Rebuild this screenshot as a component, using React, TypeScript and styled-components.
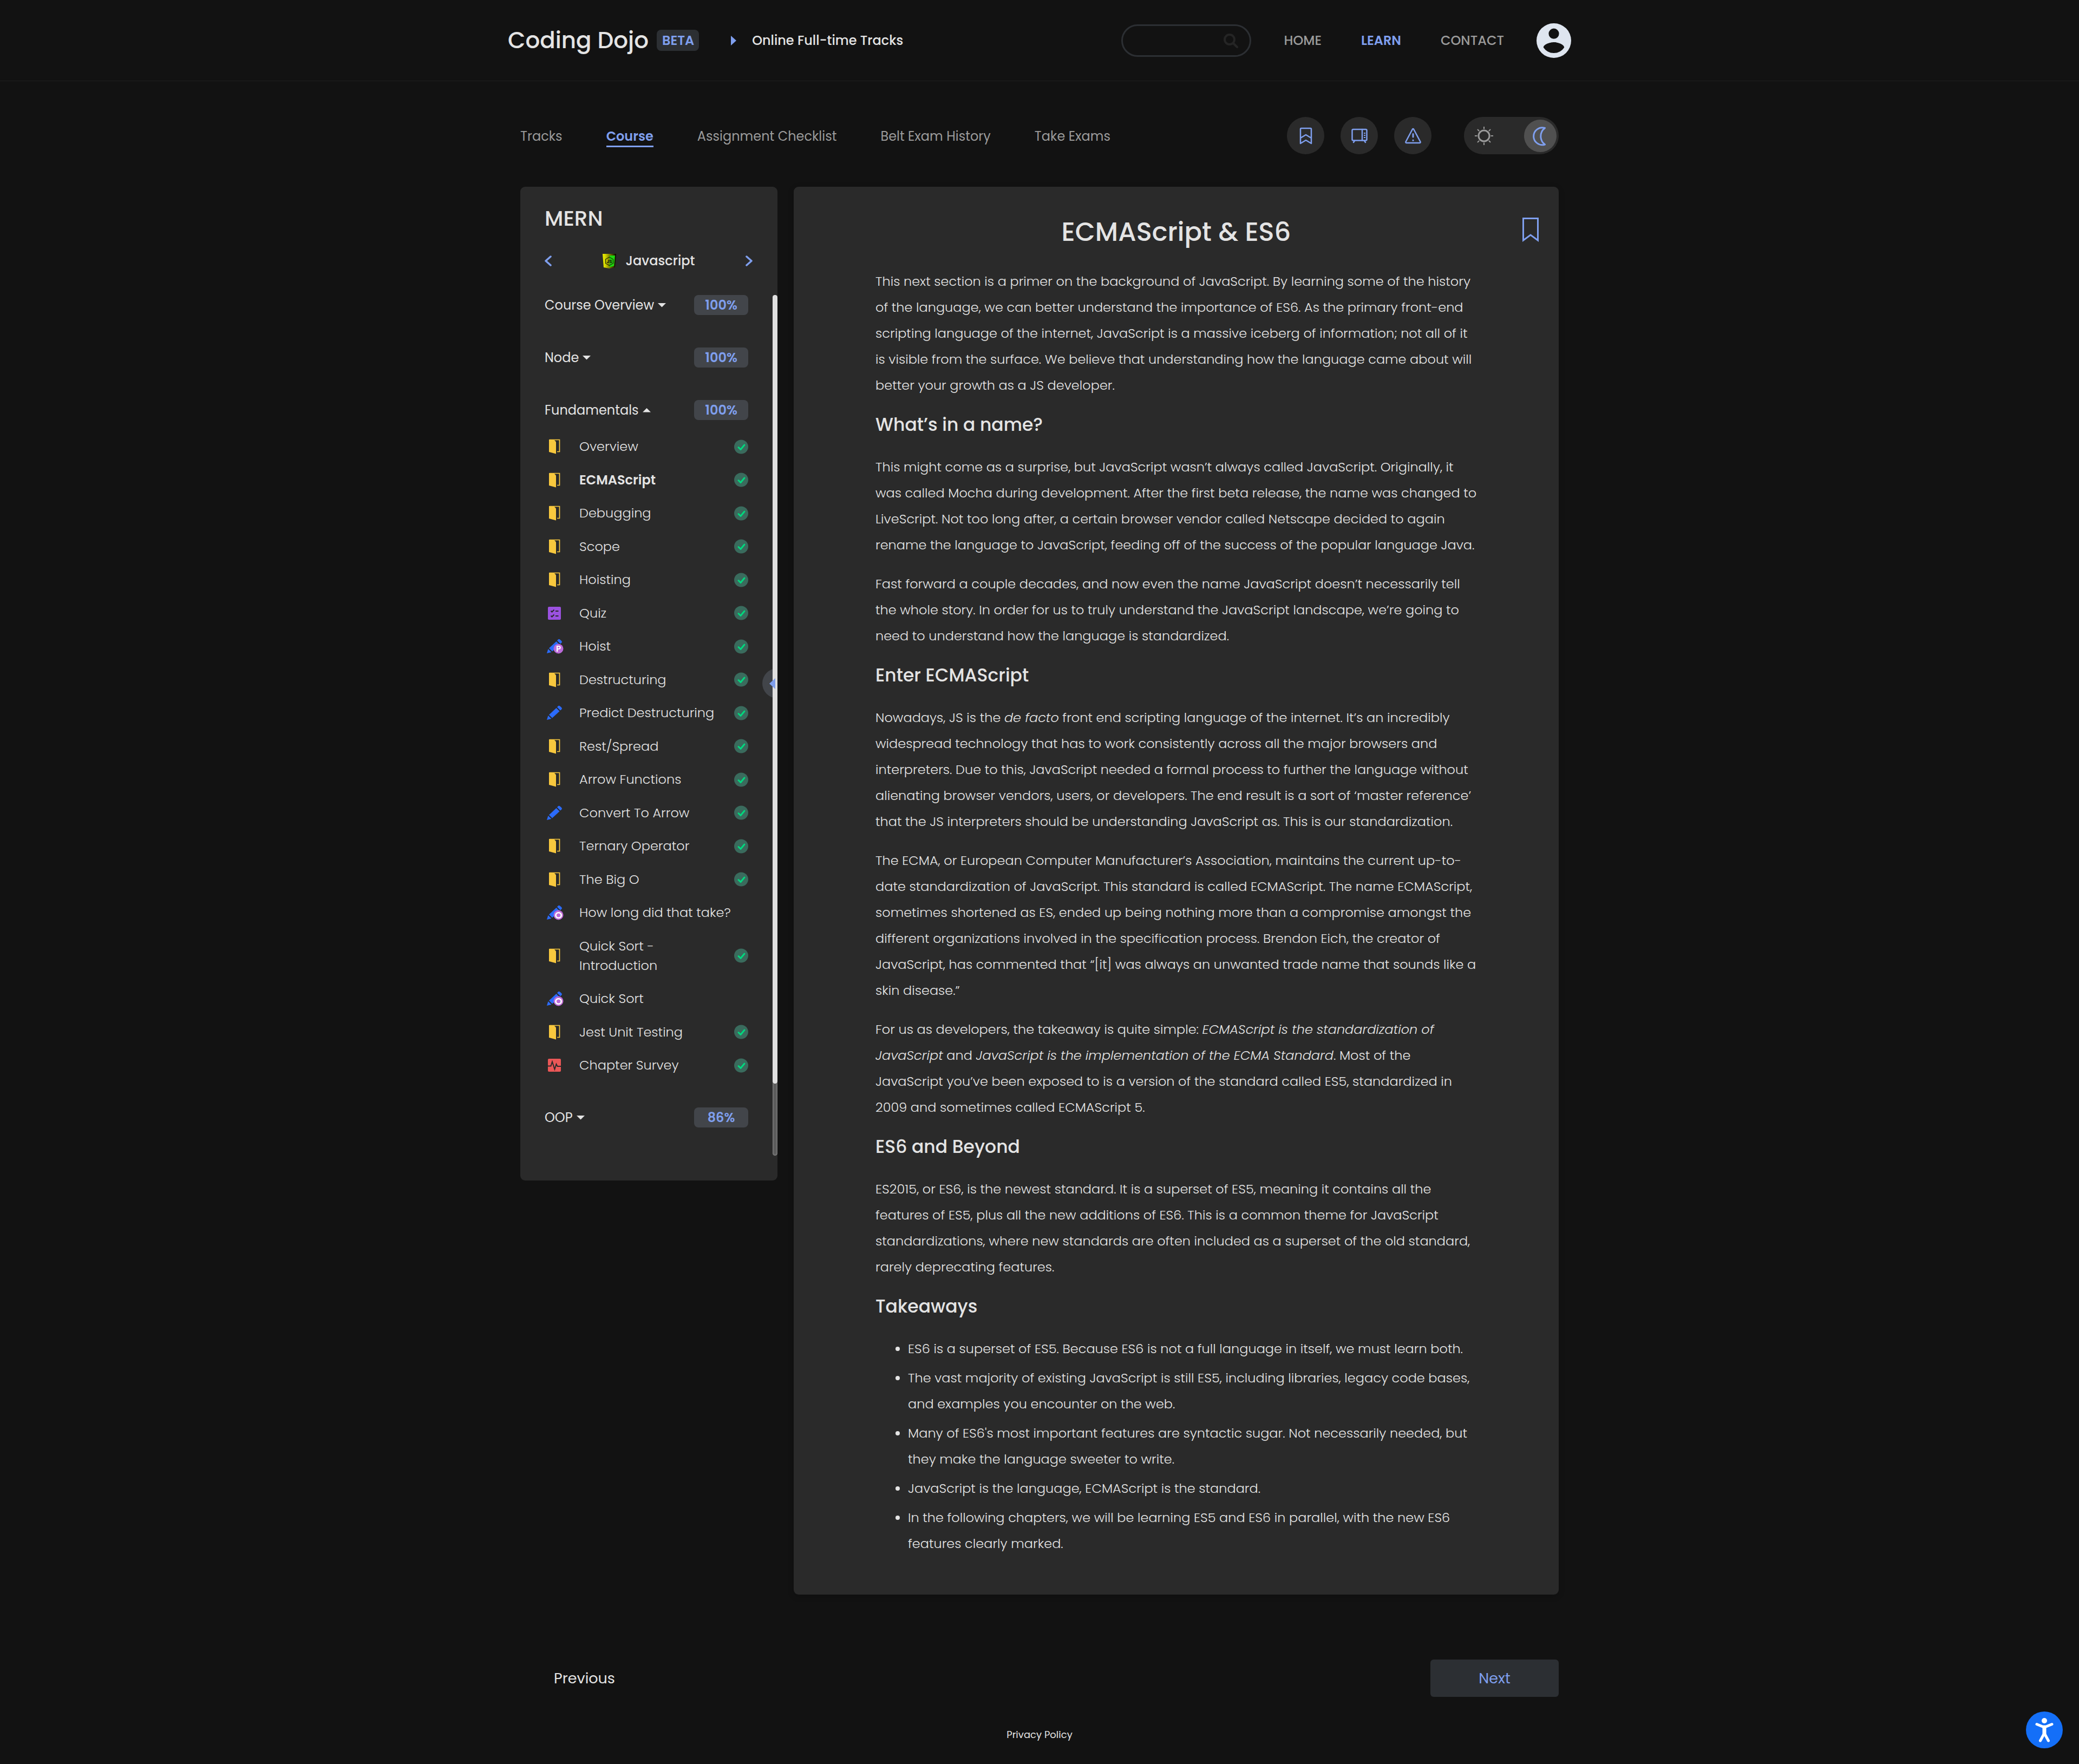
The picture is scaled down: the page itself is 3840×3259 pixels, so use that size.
import React from "react";
import styled, { createGlobalStyle, css } from "styled-components";

const color = {
  page: "#121212",
  panel: "#2a2a2a",
  line: "#202020",
  text: "#e4e4e4",
  muted: "#9b9b9b",
  accent: "#7f9fee",
  slate: "#2c2f33",
  badge: "#42454a",
};

const GlobalStyle = createGlobalStyle`
  *, *::before, *::after { box-sizing: border-box; }
  body {
    margin: 0;
    background: ${color.page};
    color: ${color.text};
    font-family: Poppins, Inter, "Liberation Sans", sans-serif;
    font-size: 24px;
    line-height: 36px;
  }
  a { color: inherit; text-decoration: none; }
  button, input { font: inherit; color: inherit; }
  button { padding: 0; border: 0; background: none; cursor: pointer; }
  svg { display: block; }
`;

/* ---------- Header ---------- */

const Header = styled.header`
  border-bottom: 1px solid ${color.line};
`;

const HeaderInner = styled.div`
  max-width: 1964px;
  min-height: 149px;
  margin: 0 auto;
  display: flex;
  align-items: center;
  justify-content: space-between;
`;

const Brand = styled.div`
  display: flex;
  align-items: center;
  gap: 15px;
  font-size: 42px;
  line-height: 60px;
  font-weight: 500;
`;

const Beta = styled.span`
  padding: 2px 9px 1px 10px;
  border-radius: 8px;
  background: ${color.slate};
  color: ${color.accent};
  font-size: 24px;
  line-height: 36px;
  font-weight: 600;
`;

const BrandSide = styled.div`
  display: flex;
  align-items: center;
  gap: 59px;
`;

const TrackLink = styled.a`
  display: flex;
  align-items: center;
  gap: 29px;
  font-weight: 500;
`;

const MainNav = styled.nav`
  display: flex;
  align-items: center;
  gap: 73px;
  font-weight: 500;
`;

const MainNavLink = styled.a<{ $active?: boolean }>`
  color: ${(p) => (p.$active ? color.accent : color.muted)};
  font-weight: ${(p) => (p.$active ? 600 : 500)};
`;

const HeaderSide = styled.div`
  display: flex;
  align-items: center;
  gap: 60px;
`;

const SearchBox = styled.label`
  width: 240px;
  height: 60px;
  padding: 0 21px;
  display: flex;
  align-items: center;
  gap: 8px;
  border: 3px solid ${color.slate};
  border-radius: 30px;
`;

const SearchInput = styled.input`
  flex: 1;
  min-width: 0;
  border: 0;
  outline: 0;
  background: transparent;
`;

/* ---------- Tab bar ---------- */

const Main = styled.main`
  max-width: 1918px;
  margin: 0 auto;
  padding-top: 66px;
`;

const TabBar = styled.div`
  display: flex;
  align-items: center;
  justify-content: space-between;
  margin-bottom: 60px;
`;

const Tabs = styled.nav`
  display: flex;
  gap: 81px;
`;

const Tab = styled.a<{ $active?: boolean }>`
  border: 3px solid transparent;
  border-width: 4px 0 3px;
  color: ${color.muted};
  line-height: 35px;
  ${(p) =>
    p.$active &&
    css`
      border-bottom-color: ${color.accent};
      color: ${color.accent};
      font-weight: 600;
    `}
`;

const Tools = styled.div`
  display: flex;
  gap: 30px;
`;

const RoundButton = styled.button`
  width: 69px;
  height: 69px;
  display: grid;
  place-items: center;
  border-radius: 50%;
  background: ${color.panel};
  color: ${color.accent};
`;

const ThemeSwitch = styled.button`
  width: 175px;
  height: 69px;
  margin-left: 30px;
  padding: 0 4px 0 18px;
  display: flex;
  align-items: center;
  justify-content: space-between;
  border-radius: 35px;
  background: ${color.panel};
  color: ${color.muted};
`;

const Knob = styled.span`
  width: 60px;
  height: 60px;
  display: grid;
  place-items: center;
  border-radius: 50%;
  background: #505050;
  color: ${color.accent};
`;

/* ---------- Sidebar ---------- */

const Columns = styled.div`
  display: grid;
  grid-template-columns: 475px minmax(0, 1fr);
  gap: 30px;
  align-items: start;
`;

const Sidebar = styled.aside`
  position: relative;
  z-index: 0;
  overflow: hidden;
  padding: 34px 0 46px;
  border-radius: 9px;
  background: ${color.panel};
`;

const SidebarTop = styled.div`
  padding: 0 46px 0 45px;
  display: flex;
  flex-direction: column;
  gap: 35px;
  margin-bottom: 45px;
`;

const StackTitle = styled.h2`
  margin: 0;
  font-size: 39px;
  line-height: 50px;
  font-weight: 500;
`;

const Pager = styled.div`
  display: flex;
  align-items: center;
  justify-content: space-between;
`;

const PagerLabel = styled.span`
  display: flex;
  align-items: center;
  gap: 18px;
  font-weight: 500;
`;

const Arrow = styled.button`
  color: ${color.accent};
`;

const ScrollArea = styled.div`
  display: flex;
`;

const Groups = styled.div`
  flex: 1;
  min-width: 0;
  padding: 0 45px 52px;
  display: flex;
  flex-direction: column;
  gap: 60px;
`;

const Track = styled.div`
  width: 9px;
  border-radius: 5px;
  background: #5a5a5a;
  box-shadow: inset 0 0 3px 1px #8a8a8a;
`;

const Thumb = styled.div`
  height: 1457px;
  border-radius: 5px;
  background: #e0e0e0;
`;

const GroupHead = styled.div`
  display: flex;
  align-items: center;
  justify-content: space-between;
  line-height: 37px;
`;

const GroupToggle = styled.button`
  display: flex;
  align-items: center;
  gap: 7px;
`;

const Percent = styled.span`
  width: 100px;
  border-radius: 8px;
  background: ${color.badge};
  color: ${color.accent};
  text-align: center;
  font-weight: 600;
`;

const Lessons = styled.ul`
  min-height: 1179px;
  margin: 31px 0 0;
  padding: 0 0 0 1px;
  display: grid;
  align-content: space-between;
  list-style: none;
`;

const Lesson = styled.li`
  display: grid;
  grid-template-columns: 34px 1fr auto;
  align-items: center;
`;

const LessonLink = styled.a<{ $active?: boolean }>`
  margin-left: 29px;
  font-weight: ${(p) => (p.$active ? 600 : 300)};
`;

const Collapse = styled.button`
  position: absolute;
  top: 890px;
  right: -27px;
  width: 55px;
  height: 55px;
  padding-left: 13px;
  color: ${color.accent};
  &::before {
    content: "";
    position: absolute;
    inset: 0;
    z-index: -1;
    border-radius: 50%;
    background: ${color.badge};
  }
`;

/* ---------- Article ---------- */

const Article = styled.article`
  padding: 53px 37px 70px;
  border-radius: 9px;
  background: ${color.panel};
  box-shadow: 0 3px 12px rgba(0, 0, 0, 0.2);
`;

const TitleRow = styled.div`
  display: grid;
  grid-template-columns: 1fr auto 1fr;
  margin-bottom: 36px;
`;

const Title = styled.h1`
  grid-column: 2;
  margin: 0;
  font-size: 48px;
  line-height: 62px;
  font-weight: 500;
`;

const SaveButton = styled.button`
  align-self: start;
  justify-self: end;
  padding-top: 4px;
  color: ${color.accent};
`;

const Body = styled.div`
  padding: 0 112px 0 114px;
  line-height: 48px;
  font-weight: 300;
`;

const Heading = styled.h2`
  margin: 24px 0 29px;
  font-size: 33px;
  line-height: 50px;
  font-weight: 500;
`;

const Paragraph = styled.p`
  margin: 0 0 24px;
`;

const Bullets = styled.ul`
  margin: 0;
  padding-left: 60px;
  display: grid;
  gap: 6px;
`;

/* ---------- Footer ---------- */

const PageNav = styled.nav`
  display: flex;
  justify-content: space-between;
  margin-top: 120px;
`;

const PageButton = styled.button<{ $primary?: boolean }>`
  width: 237px;
  border-radius: 6px;
  background: ${(p) => (p.$primary ? color.slate : "transparent")};
  color: ${(p) => (p.$primary ? color.accent : color.text)};
  font-size: 27px;
  line-height: 69px;
`;

const Footer = styled.footer`
  padding: 56px 0 41px;
  text-align: center;
  font-size: 18px;
  line-height: 27px;
`;

const AccessButton = styled.button`
  position: fixed;
  right: 30px;
  bottom: 29px;
`;

/* ---------- Icons ---------- */

const line = { fill: "none", stroke: "currentColor", strokeLinecap: "round", strokeLinejoin: "round" } as const;

const SearchIcon = () => (
  <svg width="28" height="28" viewBox="0 0 28 28" fill="none" stroke="#252525" strokeWidth="4" strokeLinecap="round">
    <circle cx="12" cy="12" r="9" />
    <path d="M19 19l7 7" />
  </svg>
);

const AvatarIcon = () => (
  <svg width="64" height="64" viewBox="2 2 20 20" fill="#dee5ef">
    <path
      fillRule="evenodd"
      d="M12 2a10 10 0 1 0 0 20 10 10 0 0 0 0-20zm0 3a3 3 0 1 1 0 6 3 3 0 0 1 0-6zm0 14.200a7.200 7.200 0 0 1-6-3.220c.03-1.990 4-3.080 6-3.080s5.970 1.090 6 3.080a7.200 7.200 0 0 1-6 3.220z"
    />
  </svg>
);

const SavedIcon = () => (
  <svg width="36" height="36" viewBox="-18 -18 36 36" {...line} strokeWidth="2.500">
    <path d="M-10 14V-12.500q0-1.500 1.500-1.500h17q1.500 0 1.500 1.500V14L0 8zM-10 4L0-2 10 4" />
  </svg>
);

const ScreenIcon = () => (
  <svg width="36" height="36" viewBox="-18 -18 36 36" {...line} strokeWidth="2.500">
    <rect x="-13.500" y="-12" width="27" height="20.500" rx="2" />
    <path d="M5-12V8.500M-9 9l-2 3M9 9l2 3" />
    <path d="M9.500-6v10" strokeWidth="3" strokeDasharray="2 2" strokeLinecap="butt" />
  </svg>
);

const WarningIcon = () => (
  <svg width="36" height="36" viewBox="-18 -18 36 36" {...line} strokeWidth="2.500">
    <path d="M-1-12.500q1-1 2 0L13.500 11q.5 2-1.500 2h-24q-2 0-1.500-2z" />
    <path d="M0-3.500V2M0 8v.5" strokeWidth="3" />
  </svg>
);

const SunIcon = () => (
  <svg width="38" height="38" viewBox="-19 -19 38 38" {...line} strokeWidth="3">
    <circle r="10" />
    {[0, 45, 90, 135, 180, 225, 270, 315].map((a) => (
      <path key={a} d="M0-13.500v-2.500" transform={`rotate(${a})`} strokeLinecap="square" strokeWidth="2" />
    ))}
  </svg>
);

const MoonIcon = () => (
  <svg width="40" height="40" viewBox="-20 -20 40 40" {...line} strokeWidth="3">
    <path d="M8.500-14.500A16 16 0 1 0 8.500 16A19 19 0 0 1 8.500-14.500z" />
  </svg>
);

const Chevron = ({ right }: { right?: boolean }) => (
  <svg width="13" height="20" viewBox="0 0 13 20" {...line} strokeWidth="3.500">
    <path d={right ? "M2 2l9 8-9 8" : "M11 2l-9 8 9 8"} />
  </svg>
);

const Caret = ({ up }: { up?: boolean }) => (
  <svg width="15" height="8" viewBox="0 0 15 8" fill="currentColor">
    <path d={up ? "M0 7.500L7.500 0 15 7.500z" : "M0 0h15L7.500 7.500z"} />
  </svg>
);

const StackLogo = () => (
  <svg width="25" height="27" viewBox="0 0 25 27">
    <defs>
      <linearGradient id="shield" x1="0" x2="1" y1="0" y2="0">
        <stop offset="0" stopColor="#eef000" />
        <stop offset="0.200" stopColor="#d2d400" />
        <stop offset="1" stopColor="#000000" />
      </linearGradient>
    </defs>
    <path d="M0 0h25l-2 25-10.500 2L2 25z" fill="url(#shield)" />
    <path d="M13 3h10l-2 19.500-8 2z" fill="#1fd60f" />
    <path d="M12.500 6l7 4v7.500l-7 4-7-4V10z" fill="none" stroke="#1c2a06" strokeWidth="1.200" />
    <text x="12.500" y="17" textAnchor="middle" fontSize="9" fontWeight="700" fill="#1c2a06">
      JS
    </text>
  </svg>
);

const Check = () => (
  <svg width="26" height="27" viewBox="0 0 26 27" role="img" aria-label="Completed">
    <circle cx="13" cy="13.500" r="13" fill="#3a6b5d" />
    <path d="M8 14.500l4 4 7-8.500" fill="none" stroke="#00d97e" strokeWidth="3" strokeLinecap="round" strokeLinejoin="round" />
  </svg>
);

type Kind = "book" | "quiz" | "pencil" | "practice" | "optional" | "survey";

const Pencil = () => (
  <g fill="#2b6bfb">
    <path d="M3 27l2.500-8 6 6z" />
    <path d="M7 17.500L20.500 5l6 6L13 23.500z" />
    <path d="M22 3.500l1.500-1.800q2-2 4 0L30 4q1.800 2 0 3.800L28 9.500z" />
  </g>
);

const LessonIcon = ({ kind }: { kind: Kind }) => (
  <svg width="34" height="28" viewBox="0 0 34 28">
    {kind === "book" && (
      <g>
        <path d="M8 1.500h18.500v22H22" fill="none" stroke="#f8c83e" strokeWidth="1.700" />
        <path d="M7 1h9l4 4.500V27.500L7 24z" fill="#f8c83e" />
      </g>
    )}
    {kind === "quiz" && (
      <g>
        <rect x="5" y="2" width="24" height="24" rx="2" fill="#9b51e0" />
        <path d="M10.500 9.500l2 2 4-4M10.500 18.500l2 2 4-4M19 10h5.500M19 19h5.500" fill="none" stroke="#2a2a2a" strokeWidth="2" />
      </g>
    )}
    {kind === "survey" && (
      <g>
        <rect x="5" y="2" width="24" height="24" rx="2" fill="#eb5757" />
        <path d="M5 15.500h5.500l2.500-8 4.500 14 3-9.500 2 4H29" fill="none" stroke="#2a2a2a" strokeWidth="2" />
      </g>
    )}
    {(kind === "pencil" || kind === "practice" || kind === "optional") && <Pencil />}
    {(kind === "practice" || kind === "optional") && (
      <g>
        <circle cx="24.500" cy="18.500" r="9" fill="#bb6bd9" />
        <text
          x="24.500"
          y={kind === "practice" ? 24 : 25}
          textAnchor="middle"
          fontSize={kind === "practice" ? 15 : 18}
          fontWeight="600"
          fill="#ffffff"
        >
          {kind === "practice" ? "P" : "O"}
        </text>
      </g>
    )}
  </svg>
);

const BookmarkIcon = () => (
  <svg width="30" height="46" viewBox="0 0 30 46" fill="none" stroke="currentColor" strokeWidth="3">
    <path d="M1.500 42V1.500h27V42L15 32z" />
  </svg>
);

const AccessIcon = () => (
  <svg width="68" height="68" viewBox="0 0 68 68">
    <circle cx="34" cy="34" r="34" fill="#146ff8" />
    <g fill="none" stroke="#ffffff" strokeWidth="5" strokeLinecap="round" strokeLinejoin="round">
      <path d="M20 23.500l11 4.500h6l11-4.500M33 42l-6.500 12M35 42l6.500 12" />
      <path d="M34 30v11" strokeWidth="7" />
    </g>
    <circle cx="34" cy="17" r="5" fill="#ffffff" />
  </svg>
);

/* ---------- Data ---------- */

const lessons: { name: string; kind: Kind; done: boolean }[] = [
  { name: "Overview", kind: "book", done: true },
  { name: "ECMAScript", kind: "book", done: true },
  { name: "Debugging", kind: "book", done: true },
  { name: "Scope", kind: "book", done: true },
  { name: "Hoisting", kind: "book", done: true },
  { name: "Quiz", kind: "quiz", done: true },
  { name: "Hoist", kind: "practice", done: true },
  { name: "Destructuring", kind: "book", done: true },
  { name: "Predict Destructuring", kind: "pencil", done: true },
  { name: "Rest/Spread", kind: "book", done: true },
  { name: "Arrow Functions", kind: "book", done: true },
  { name: "Convert To Arrow", kind: "pencil", done: true },
  { name: "Ternary Operator", kind: "book", done: true },
  { name: "The Big O", kind: "book", done: true },
  { name: "How long did that take?", kind: "optional", done: false },
  { name: "Quick Sort - Introduction", kind: "book", done: true },
  { name: "Quick Sort", kind: "optional", done: false },
  { name: "Jest Unit Testing", kind: "book", done: true },
  { name: "Chapter Survey", kind: "survey", done: true },
];

const tabs = ["Tracks", "Course", "Assignment Checklist", "Belt Exam History", "Take Exams"];
const pages = ["HOME", "LEARN", "CONTACT"];

const Group = ({ name, percent, children }: { name: string; percent: number; children?: React.ReactNode }) => (
  <section>
    <GroupHead>
      <GroupToggle aria-expanded={Boolean(children)}>
        {name}
        <Caret up={Boolean(children)} />
      </GroupToggle>
      <Percent>{percent}%</Percent>
    </GroupHead>
    {children}
  </section>
);

export default function App() {
  return (
    <>
      <GlobalStyle />
      <Header>
        <HeaderInner>
          <BrandSide>
            <Brand>
              Coding Dojo
              <Beta>BETA</Beta>
            </Brand>
            <TrackLink href="#tracks">
              <svg width="10" height="18" viewBox="0 0 10 18" fill={color.accent}>
                <path d="M0 0l10 9-10 9z" />
              </svg>
              Online Full-time Tracks
            </TrackLink>
          </BrandSide>
          <HeaderSide>
            <SearchBox>
              <SearchInput type="text" aria-label="Search" />
              <SearchIcon />
            </SearchBox>
            <MainNav>
              {pages.map((p) => (
                <MainNavLink key={p} href={`#${p.toLowerCase()}`} $active={p === "LEARN"}>
                  {p}
                </MainNavLink>
              ))}
            </MainNav>
            <button aria-label="Account">
              <AvatarIcon />
            </button>
          </HeaderSide>
        </HeaderInner>
      </Header>

      <Main>
        <TabBar>
          <Tabs>
            {tabs.map((t) => (
              <Tab key={t} href="#tab" $active={t === "Course"}>
                {t}
              </Tab>
            ))}
          </Tabs>
          <Tools>
            <RoundButton aria-label="Bookmarks">
              <SavedIcon />
            </RoundButton>
            <RoundButton aria-label="Lecture screen">
              <ScreenIcon />
            </RoundButton>
            <RoundButton aria-label="Report a problem">
              <WarningIcon />
            </RoundButton>
            <ThemeSwitch role="switch" aria-checked="true" aria-label="Dark mode">
              <SunIcon />
              <Knob>
                <MoonIcon />
              </Knob>
            </ThemeSwitch>
          </Tools>
        </TabBar>

        <Columns>
          <Sidebar>
            <SidebarTop>
              <StackTitle>MERN</StackTitle>
              <Pager>
                <Arrow aria-label="Previous course">
                  <Chevron />
                </Arrow>
                <PagerLabel>
                  <StackLogo />
                  Javascript
                </PagerLabel>
                <Arrow aria-label="Next course">
                  <Chevron right />
                </Arrow>
              </Pager>
            </SidebarTop>
            <ScrollArea>
              <Groups>
                <Group name="Course Overview" percent={100} />
                <Group name="Node" percent={100} />
                <Group name="Fundamentals" percent={100}>
                  <Lessons>
                    {lessons.map((l) => (
                      <Lesson key={l.name}>
                        <LessonIcon kind={l.kind} />
                        <LessonLink href="#lesson" $active={l.name === "ECMAScript"}>
                          {l.name}
                        </LessonLink>
                        {l.done && <Check />}
                      </Lesson>
                    ))}
                  </Lessons>
                </Group>
                <Group name="OOP" percent={86} />
              </Groups>
              <Track>
                <Thumb />
              </Track>
            </ScrollArea>
            <Collapse aria-label="Collapse sidebar">
              <svg width="11" height="20" viewBox="0 0 11 20" fill="currentColor">
                <path d="M11 0v20L0 10z" />
              </svg>
            </Collapse>
          </Sidebar>

          <Article>
            <TitleRow>
              <Title>ECMAScript &amp; ES6</Title>
              <SaveButton aria-label="Bookmark this page">
                <BookmarkIcon />
              </SaveButton>
            </TitleRow>
            <Body>
              <Paragraph>
                This next section is a primer on the background of JavaScript. By learning some of the history of the
                language, we can better understand the importance of ES6. As the primary front-end scripting language of
                the internet, JavaScript is a massive iceberg of information; not all of it is visible from the surface.
                We believe that understanding how the language came about will better your growth as a JS developer.
              </Paragraph>
              <Heading>What’s in a name?</Heading>
              <Paragraph>
                This might come as a surprise, but JavaScript wasn’t always called JavaScript. Originally, it was called
                Mocha during development. After the first beta release, the name was changed to LiveScript. Not too long
                after, a certain browser vendor called Netscape decided to again rename the language to JavaScript,
                feeding off of the success of the popular language Java.
              </Paragraph>
              <Paragraph>
                Fast forward a couple decades, and now even the name JavaScript doesn’t necessarily tell the whole
                story. In order for us to truly understand the JavaScript landscape, we’re going to need to understand
                how the language is standardized.
              </Paragraph>
              <Heading>Enter ECMAScript</Heading>
              <Paragraph>
                Nowadays, JS is the <em>de facto</em> front end scripting language of the internet. It’s an incredibly
                widespread technology that has to work consistently across all the major browsers and interpreters. Due
                to this, JavaScript needed a formal process to further the language without alienating browser vendors,
                users, or developers. The end result is a sort of ‘master reference’ that the JS interpreters should be
                understanding JavaScript as. This is our standardization.
              </Paragraph>
              <Paragraph>
                The ECMA, or European Computer Manufacturer’s Association, maintains the current up-to-date
                standardization of JavaScript. This standard is called ECMAScript. The name ECMAScript, sometimes
                shortened as ES, ended up being nothing more than a compromise amongst the different organizations
                involved in the specification process. Brendon Eich, the creator of JavaScript, has commented that “[it]
                was always an unwanted trade name that sounds like a skin disease.”
              </Paragraph>
              <Paragraph>
                For us as developers, the takeaway is quite simple:{" "}
                <em>ECMAScript is the standardization of JavaScript</em> and{" "}
                <em>JavaScript is the implementation of the ECMA Standard</em>. Most of the JavaScript you’ve been
                exposed to is a version of the standard called ES5, standardized in 2009 and sometimes called ECMAScript
                5.
              </Paragraph>
              <Heading>ES6 and Beyond</Heading>
              <Paragraph>
                ES2015, or ES6, is the newest standard. It is a superset of ES5, meaning it contains all the features of
                ES5, plus all the new additions of ES6. This is a common theme for JavaScript standardizations, where
                new standards are often included as a superset of the old standard, rarely deprecating features.
              </Paragraph>
              <Heading>Takeaways</Heading>
              <Bullets>
                <li>ES6 is a superset of ES5. Because ES6 is not a full language in itself, we must learn both.</li>
                <li>
                  The vast majority of existing JavaScript is still ES5, including libraries, legacy code bases, and
                  examples you encounter on the web.
                </li>
                <li>
                  Many of ES6's most important features are syntactic sugar. Not necessarily needed, but they make the
                  language sweeter to write.
                </li>
                <li>JavaScript is the language, ECMAScript is the standard.</li>
                <li>
                  In the following chapters, we will be learning ES5 and ES6 in parallel, with the new ES6 features
                  clearly marked.
                </li>
              </Bullets>
            </Body>
          </Article>
        </Columns>

        <PageNav>
          <PageButton>Previous</PageButton>
          <PageButton $primary>Next</PageButton>
        </PageNav>
      </Main>

      <Footer>
        <a href="#privacy">Privacy Policy</a>
      </Footer>

      <AccessButton aria-label="Accessibility options">
        <AccessIcon />
      </AccessButton>
    </>
  );
}
